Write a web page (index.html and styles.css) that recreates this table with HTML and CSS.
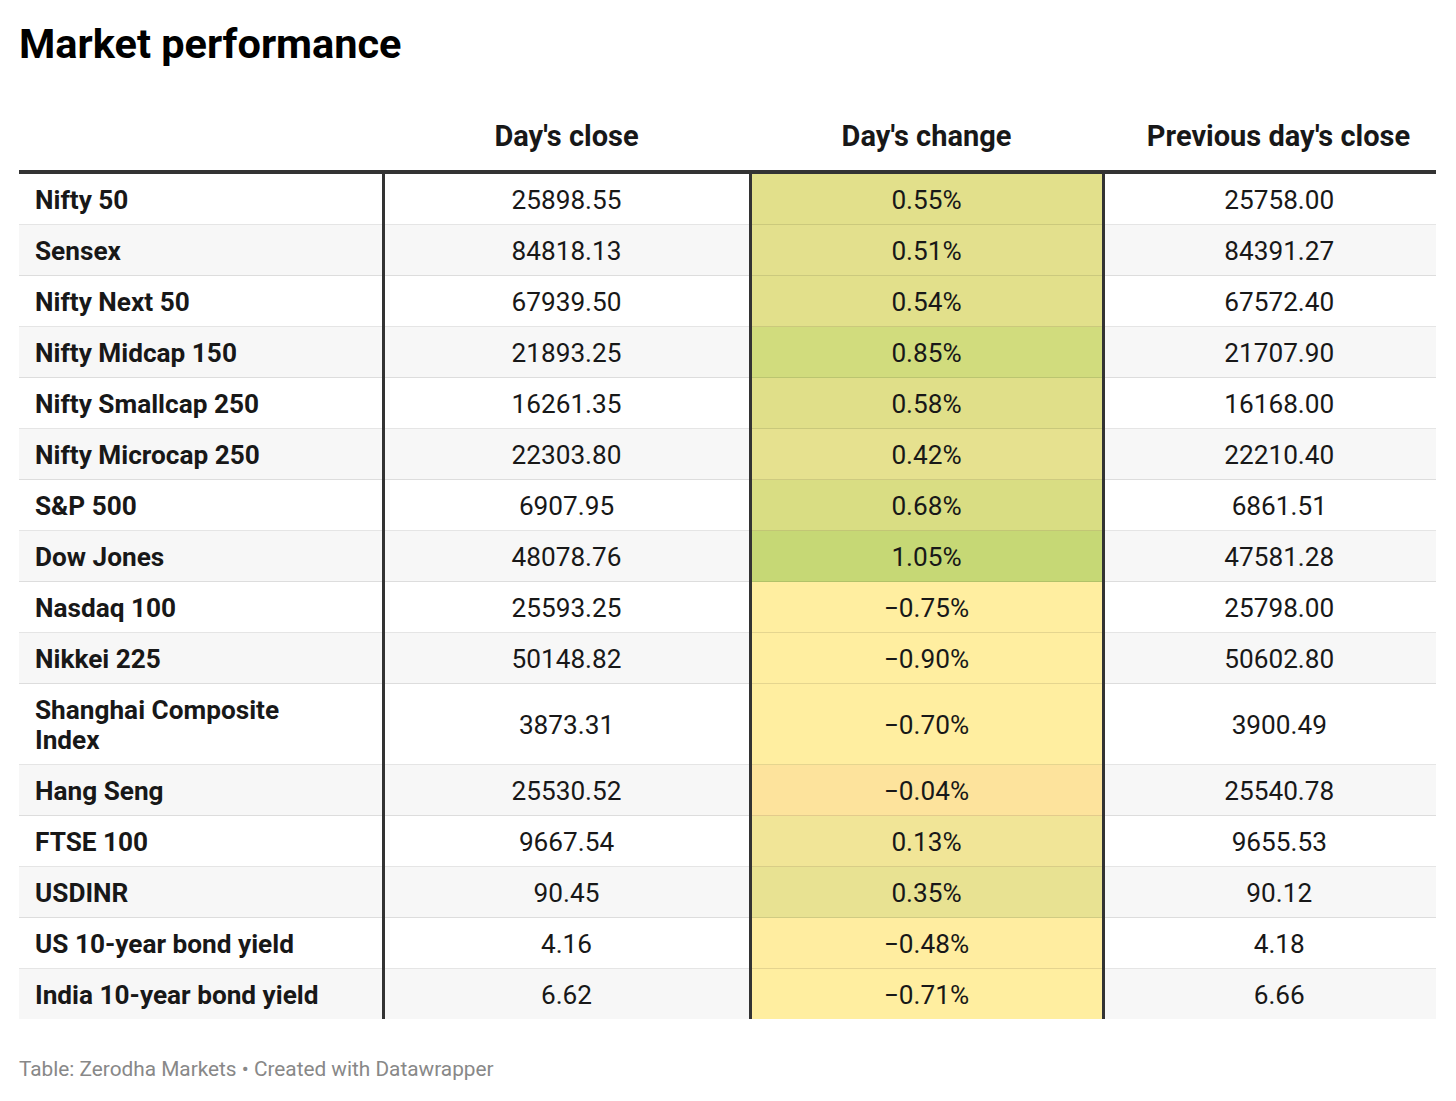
FILE: index.html
```html
<!DOCTYPE html>
<html>
<head>
<meta charset="utf-8">
<link rel="stylesheet" href="styles.css">
</head>
<body>
<div class="chart">
  <h1 class="title">Market performance</h1>
  <table class="data">
    <colgroup>
      <col class="c1"><col class="c2"><col class="c3"><col class="c4">
    </colgroup>
    <thead>
      <tr>
        <th class="name"></th>
        <th>Day's close</th>
        <th>Day's change</th>
        <th class="last">Previous day's close</th>
      </tr>
    </thead>
    <tbody>
      <tr><td class="name">Nifty 50</td><td class="num">25898.55</td><td class="chg" style="background:#e2e08b">0.55%</td><td class="num last">25758.00</td></tr>
      <tr><td class="name">Sensex</td><td class="num">84818.13</td><td class="chg" style="background:#e3e08d">0.51%</td><td class="num last">84391.27</td></tr>
      <tr><td class="name">Nifty Next 50</td><td class="num">67939.50</td><td class="chg" style="background:#e2e08b">0.54%</td><td class="num last">67572.40</td></tr>
      <tr><td class="name">Nifty Midcap 150</td><td class="num">21893.25</td><td class="chg" style="background:#d1dc7d">0.85%</td><td class="num last">21707.90</td></tr>
      <tr><td class="name">Nifty Smallcap 250</td><td class="num">16261.35</td><td class="chg" style="background:#e0df89">0.58%</td><td class="num last">16168.00</td></tr>
      <tr><td class="name">Nifty Microcap 250</td><td class="num">22303.80</td><td class="chg" style="background:#e6e18f">0.42%</td><td class="num last">22210.40</td></tr>
      <tr><td class="name">S&amp;P 500</td><td class="num">6907.95</td><td class="chg" style="background:#d9dd83">0.68%</td><td class="num last">6861.51</td></tr>
      <tr><td class="name">Dow Jones</td><td class="num">48078.76</td><td class="chg" style="background:#c6d875">1.05%</td><td class="num last">47581.28</td></tr>
      <tr><td class="name">Nasdaq 100</td><td class="num">25593.25</td><td class="chg" style="background:#ffeea0">−0.75%</td><td class="num last">25798.00</td></tr>
      <tr><td class="name">Nikkei 225</td><td class="num">50148.82</td><td class="chg" style="background:#ffeea0">−0.90%</td><td class="num last">50602.80</td></tr>
      <tr><td class="name">Shanghai Composite<br>Index</td><td class="num">3873.31</td><td class="chg" style="background:#ffeea0">−0.70%</td><td class="num last">3900.49</td></tr>
      <tr><td class="name">Hang Seng</td><td class="num">25530.52</td><td class="chg" style="background:#fde39c">−0.04%</td><td class="num last">25540.78</td></tr>
      <tr><td class="name">FTSE 100</td><td class="num">9667.54</td><td class="chg" style="background:#f1e597">0.13%</td><td class="num last">9655.53</td></tr>
      <tr><td class="name">USDINR</td><td class="num">90.45</td><td class="chg" style="background:#e8e292">0.35%</td><td class="num last">90.12</td></tr>
      <tr><td class="name">US 10-year bond yield</td><td class="num">4.16</td><td class="chg" style="background:#ffeda0">−0.48%</td><td class="num last">4.18</td></tr>
      <tr><td class="name">India 10-year bond yield</td><td class="num">6.62</td><td class="chg" style="background:#ffeea0">−0.71%</td><td class="num last">6.66</td></tr>
    </tbody>
  </table>
  <div class="footer">Table: Zerodha Markets • Created with Datawrapper</div>
</div>
</body>
</html>
```

FILE: styles.css
```css
html, body {
  margin: 0;
  padding: 0;
  background: #ffffff;
}

body {
  font-family: Roboto, "Liberation Sans", sans-serif;
  color: #181818;
}

.chart {
  padding: 0 20px 0 19px;
}

.title {
  margin: 20px 0 0 0;
  font-size: 41.5px;
  line-height: 48px;
  font-weight: 700;
  color: #000;
}

.data {
  width: 1417px;
  border-collapse: collapse;
  margin-top: 53px;
  font-size: 26.2px;
  line-height: 30px;
}

.c1 { width: 364px; }
.c2 { width: 367px; }
.c3 { width: 353px; }
.c4 { width: 333px; }

.data th {
  font-size: 29px;
  font-weight: 700;
  text-align: center;
  padding: 0 8px 19px 8px;
  border-bottom: 4px solid #333333;
  color: #181818;
}

.data td {
  padding: 11px 8px 9px 8px;
  border-bottom: 1px solid rgba(0, 0, 0, 0.1);
  text-align: center;
  vertical-align: middle;
}

.data td.name {
  text-align: left;
  font-weight: 700;
  padding-left: 16px;
  border-right: 3px solid #333333;
}

.data td.chg {
  border-left: 3px solid #333333;
  border-right: 3px solid #333333;
}

.data .last {
  padding-left: 18px;
  padding-right: 0;
}

.data tbody tr:nth-child(even) td {
  background: #f7f7f7;
}

.data tbody tr:last-child td {
  border-bottom: none;
}

.footer {
  margin-top: 38px;
  font-size: 20.8px;
  line-height: 24px;
  color: #888888;
}
```
